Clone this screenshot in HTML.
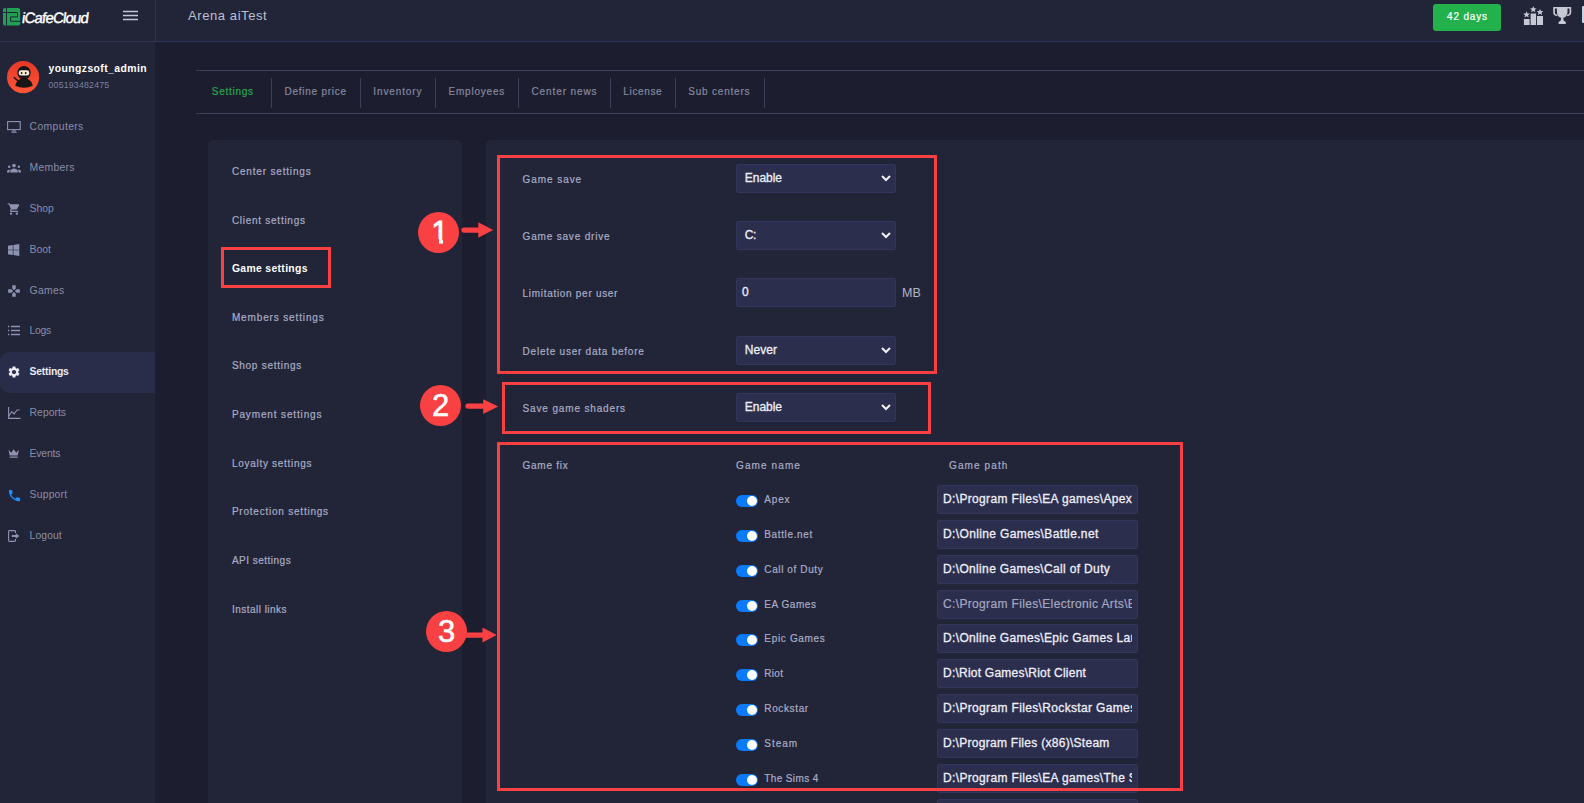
<!DOCTYPE html>
<html lang="en">
<head>
<meta charset="utf-8">
<title>iCafeCloud - Game settings</title>
<style>
*{box-sizing:border-box;margin:0;padding:0}
html,body{width:1584px;height:803px;overflow:hidden;background:#1c1d2f;font-family:"Liberation Sans",sans-serif}
#app{position:relative;width:1584px;height:803px;overflow:hidden;background:#1c1d2f}
.abs{position:absolute}
.t{position:absolute;white-space:pre;line-height:20px;height:20px}
#hdr{position:absolute;left:0;top:0;width:1584px;height:42px;background:#222438;border-bottom:1px solid #31345a}
#hdiv{position:absolute;left:155px;top:0;width:1px;height:41px;background:#31345a}
#side{position:absolute;left:0;top:42px;width:155px;height:761px;background:#222438}
#act{position:absolute;left:0;top:352px;width:155px;height:41px;background:#292d49;border-radius:9px 0 0 9px}
.ln{position:absolute;left:196px;width:1388px;height:1px;background:#3d4058}
.tdv{position:absolute;top:78px;width:1px;height:30px;background:#3d4058}
#lp{position:absolute;left:208px;top:140px;width:254px;height:700px;background:#222438;border-radius:5px}
#rp{position:absolute;left:486px;top:140px;width:1110px;height:700px;background:#222438;border-radius:5px}
.sel{position:absolute;left:736px;width:160px;height:28.6px;background:#2c2e4e;border:1px solid #32355c;border-radius:2px}
.sel svg{position:absolute;left:143.7px;top:9.6px}
.rb{position:absolute;border:3px solid #f94144}
.nc{position:absolute;width:41px;height:41px;border-radius:50%;background:#f94144;color:#fff;font-size:31px;line-height:42px;text-align:center;-webkit-text-stroke:0.55px}
.tg{position:absolute;left:735.9px;width:22.2px;height:12.4px;border-radius:6.2px;background:#0a7bff}
.tg i{position:absolute;right:1.1px;top:1.1px;width:10.2px;height:10.2px;border-radius:50%;background:#fff}
.pi{position:absolute;left:937px;width:201px;height:28.6px;background:#2c2e4e;border:1px solid #32355c;border-radius:2px;overflow:hidden}
.pt{left:943px;width:189px;overflow:hidden;font-size:12px;color:#eeeff7;-webkit-text-stroke:0.3px}
.pt.dim{color:#a4a8c0;-webkit-text-stroke:0.2px}
#btn{position:absolute;left:1433px;top:4px;width:68px;height:27px;background:#23b14d;border-radius:3px}
</style>
</head>
<body>
<div id="app">
  <!-- header -->
  <div id="hdr"></div>
  <div id="hdiv"></div>
  <!-- logo -->
  <svg class="abs" style="left:3px;top:8.300px" width="18" height="18" viewBox="0 0 18 18">
    <rect x="0" y="0" width="17.200" height="17.500" rx="2" fill="#21a253"/>
    <path d="M3.500 0V17.500 M0 4.500H3.500 M4.200 4.500H14.500V8.900H7.600V13.300H17.200" fill="none" stroke="#222438" stroke-width="1"/>
  </svg>
  <!-- hamburger -->
  <svg class="abs" style="left:123px;top:10px" width="16" height="12" viewBox="0 0 16 12">
    <path d="M0 1.6H15 M0 5.6H15 M0 9.6H15" stroke="#c3c6d4" stroke-width="1.5" fill="none"/>
  </svg>
  <div id="btn"></div>
  <!-- ranking icon -->
  <svg class="abs" style="left:1523px;top:5px" width="22" height="21" viewBox="0 0 22 21">
    <g fill="#c6c8d4">
      <rect x="0.9" y="14" width="5.7" height="6"/>
      <rect x="7.6" y="8.5" width="5.5" height="11.5"/>
      <rect x="14" y="11" width="6" height="9"/>
      <path id="st" d="M3.6 6.2l.9 2.2 2.4.2-1.8 1.6.6 2.3-2.1-1.3-2.1 1.3.6-2.3L.3 8.600l2.400-.2z"/>
      <path d="M10.300 1.000l.9 2.2 2.4.2-1.8 1.6.6 2.3-2.1-1.300-2.100 1.300.6-2.300-1.800-1.600 2.400-.2z"/>
      <path d="M17.000 3.700l.9 2.200 2.400.2-1.800 1.600.6 2.300-2.100-1.300-2.100 1.300.6-2.300-1.800-1.600 2.400-.2z"/>
    </g>
  </svg>
  <!-- trophy -->
  <svg class="abs" style="left:1553px;top:6px" width="19" height="19" viewBox="0 0 19 19">
    <g fill="#c6c8d4">
      <path d="M3.900 1h10.600v4.800c0 3.600-2.200 6.200-5.300 6.200S3.900 9.400 3.900 5.800z"/>
      <path d="M0.200 1h4.200v1.500H1.900v4.300c0 1 .9 1.700 2.500 2v1.500C1.600 9.900.2 8.700.2 6.800z"/>
      <path d="M18.200 1h-4.200v1.500h2.500v4.300c0 1-.9 1.700-2.500 2v1.500c2.800-.4 4.200-1.600 4.200-3.500z"/>
      <path d="M8.200 11.500h2l.4 3 2.200 1.600v1.900H5.600v-1.900l2.200-1.600z"/>
    </g>
  </svg>
  <div class="abs" style="left:1582.300px;top:6.300px;width:4px;height:16.500px;background:#c9d6e2;border-radius:1px"></div>

  <!-- sidebar -->
  <div id="side"></div>
  <div id="act"></div>
  <!-- avatar -->
  <svg class="abs" style="left:7px;top:60.700px" width="33" height="33" viewBox="0 0 33 33">
    <defs><linearGradient id="ag" x1="0" y1="0" x2="0" y2="1"><stop offset="0" stop-color="#e63828"/><stop offset="1" stop-color="#ff5735"/></linearGradient></defs>
    <circle cx="16.100" cy="16.200" r="16.100" fill="url(#ag)"/>
    <path d="M8.200 24.800C9.300 19.800 12.800 17.200 17 17.200s7.700 2.600 8.800 7.600Q17 28.600 8.200 24.800z" fill="#161616"/>
    <circle cx="17" cy="11.800" r="6.700" fill="#161616"/>
    <rect x="11.700" y="9.300" width="10.600" height="5.300" rx="2.400" fill="#f6ecd9"/>
    <ellipse cx="14.600" cy="12.100" rx="0.900" ry="1.100" fill="#161616"/>
    <ellipse cx="18.700" cy="12.100" rx="0.900" ry="1.100" fill="#161616"/>
    <path d="M6.800 16.200l5.200 4.600" stroke="#161616" stroke-width="1.500" fill="none"/>
  </svg>

  <!-- sidebar icons -->
  <!-- computers -->
  <svg class="abs" style="left:7px;top:121px" width="14" height="12" viewBox="0 0 14 12"><g fill="none" stroke="#8d93b0" stroke-width="1.100"><rect x="0.600" y="0.600" width="12.600" height="8"/><path d="M4.300 11.300h5.400M5.800 11l.5-2.400M8.200 11l-.5-2.400" /></g></svg>
  <!-- members -->
  <svg class="abs" style="left:7px;top:163px" width="14" height="10" viewBox="0 0 14 10"><g fill="#8d93b0"><circle cx="7" cy="2.600" r="1.800"/><path d="M3.300 9.500V8.300c0-1.800 1.900-2.800 3.700-2.800s3.700 1 3.700 2.800v1.200z"/><circle cx="2.200" cy="3.800" r="1.250"/><path d="M0 9.500V8.600c0-1.200 1-1.900 2.200-1.900.4 0 .8.050 1.100.150-.5.600-.8 1.300-.8 2.100v.550z"/><circle cx="11.800" cy="3.800" r="1.250"/><path d="M14 9.500V8.600c0-1.200-1-1.900-2.200-1.900-.4 0-.8.050-1.100.150.5.600.8 1.300.8 2.100v.550z"/></g></svg>
  <!-- shop -->
  <svg class="abs" style="left:6.500px;top:201.500px" width="14" height="14" viewBox="0 0 24 24"><path fill="#8d93b0" d="M7 18c-1.100 0-1.990.9-1.990 2S5.900 22 7 22s2-.9 2-2-.9-2-2-2zM1 2v2h2l3.600 7.590-1.350 2.450c-.16.280-.25.610-.25.960 0 1.100.9 2 2 2h12v-2H7.420c-.14 0-.25-.11-.25-.25l.03-.12.900-1.630h7.450c.75 0 1.410-.41 1.750-1.030l3.580-6.490c.08-.14.120-.31.120-.48 0-.55-.45-1-1-1H5.210l-.94-2H1zm16 16c-1.100 0-1.990.9-1.990 2s.89 2 1.990 2 2-.9 2-2-.9-2-2-2z"/></svg>
  <!-- boot (windows) -->
  <svg class="abs" style="left:8px;top:244px" width="12" height="12" viewBox="0 0 12 12"><path fill="#8d93b0" d="M0 1.700l4.800-.7v4.700H0zM5.400.900L11.300 0v5.700H5.400zM0 6.300h4.800V11L0 10.300zM5.400 6.300h5.900V12l-5.900-.9z"/></svg>
  <!-- games -->
  <svg class="abs" style="left:7px;top:283.500px" width="14" height="14" viewBox="0 0 24 24"><path fill="#8d93b0" d="M15 7.500V2H9v5.500l3 3 3-3zM7.500 9H2v6h5.500l3-3-3-3zM9 16.500V22h6v-5.500l-3-3-3 3zM16.500 9l-3 3 3 3H22V9h-5.500z"/></svg>
  <!-- logs -->
  <svg class="abs" style="left:8px;top:325px" width="13" height="11" viewBox="0 0 13 11"><path d="M0 1.500h1.300M3 1.500h9M0 5.500h1.300M3 5.500h9M0 9.500h1.300M3 9.500h9" stroke="#8d93b0" stroke-width="1.300" fill="none"/></svg>
  <!-- settings gear -->
  <svg class="abs" style="left:7px;top:365px" width="14" height="14" viewBox="0 0 24 24"><path fill="#e8e9f2" d="M19.140 12.940c.04-.3.060-.61.060-.94 0-.32-.02-.64-.07-.94l2.030-1.580c.18-.14.230-.41.120-.61l-1.920-3.320c-.12-.22-.37-.29-.59-.22l-2.390.96c-.5-.38-1.030-.7-1.620-.94l-.36-2.540c-.04-.24-.24-.41-.48-.41h-3.840c-.24 0-.43.170-.47.410l-.36 2.540c-.59.240-1.130.570-1.620.94l-2.390-.96c-.22-.08-.47 0-.59.220L2.740 8.870c-.12.210-.08.470.12.610l2.030 1.580c-.05.300-.09.630-.09.940s.02.640.07.940l-2.030 1.580c-.18.140-.23.410-.12.610l1.920 3.320c.12.220.37.290.59.220l2.390-.96c.5.380 1.030.7 1.620.94l.36 2.540c.05.240.24.410.48.410h3.840c.24 0 .44-.17.470-.41l.36-2.540c.59-.24 1.130-.56 1.620-.94l2.390.96c.22.080.47 0 .59-.22l1.920-3.320c.12-.22.070-.47-.12-.61l-2.010-1.580zM12 15.600c-1.980 0-3.600-1.620-3.600-3.600s1.620-3.600 3.600-3.600 3.600 1.620 3.600 3.600-1.620 3.600-3.600 3.600z"/></svg>
  <!-- reports -->
  <svg class="abs" style="left:8px;top:407px" width="13" height="12" viewBox="0 0 13 12"><path d="M0.600 0v11.400H12.500M0.600 9.500l3.200-5 2.300 2.300 3-3.800h2.500" stroke="#8d93b0" stroke-width="1.100" fill="none"/></svg>
  <!-- events crown -->
  <svg class="abs" style="left:8px;top:449px" width="12" height="10" viewBox="0 0 12 10"><path fill="#8d93b0" d="M0.500 0.800l2.700 3L5.700 0.300l2.500 3.500 2.700-3L9.700 6.500H1.700zM1.700 7.600h8v1.200h-8z"/></svg>
  <!-- support phone -->
  <svg class="abs" style="left:6.500px;top:487.500px" width="15" height="15" viewBox="0 0 24 24"><path fill="#1e90ff" d="M6.620 10.790c1.440 2.830 3.760 5.140 6.590 6.590l2.200-2.200c.27-.27.670-.36 1.020-.24 1.120.37 2.330.57 3.570.57.550 0 1 .45 1 1V20c0 .55-.45 1-1 1-9.390 0-17-7.610-17-17 0-.55.450-1 1-1h3.500c.55 0 1 .45 1 1 0 1.250.2 2.450.57 3.570.11.350.03.740-.25 1.020l-2.200 2.200z"/></svg>
  <!-- logout -->
  <svg class="abs" style="left:8px;top:530px" width="12" height="12" viewBox="0 0 12 12"><path d="M7.500 3V1.500c0-.5-.4-.9-.9-.9H1.500c-.5 0-.9.400-.9.900v9c0 .5.400.9.900.9h5.100c.5 0 .9-.4.900-.9V9" stroke="#8d93b0" stroke-width="1.100" fill="none"/><path fill="#8d93b0" d="M3.800 5h4V3.200L11.300 6 7.800 8.800V7h-4z"/></svg>

  <!-- tabs -->
  <div class="ln" style="top:70px"></div>
  <div class="ln" style="top:113px"></div>
  <div class="tdv" style="left:271px"></div>
  <div class="tdv" style="left:360px"></div>
  <div class="tdv" style="left:435px"></div>
  <div class="tdv" style="left:518px"></div>
  <div class="tdv" style="left:610px"></div>
  <div class="tdv" style="left:675px"></div>
  <div class="tdv" style="left:764px"></div>

  <!-- panels -->
  <div id="lp"></div>
  <div id="rp"></div>

  <!-- selects -->
  <div class="sel" style="top:164px"><svg width="10" height="7" viewBox="0 0 10 7"><path d="M1 1l4 4 4-4" stroke="#f0f0f6" stroke-width="2" fill="none"/></svg></div>
  <div class="sel" style="top:221px"><svg width="10" height="7" viewBox="0 0 10 7"><path d="M1 1l4 4 4-4" stroke="#f0f0f6" stroke-width="2" fill="none"/></svg></div>
  <div class="sel" style="top:278px"></div>
  <div class="sel" style="top:336px"><svg width="10" height="7" viewBox="0 0 10 7"><path d="M1 1l4 4 4-4" stroke="#f0f0f6" stroke-width="2" fill="none"/></svg></div>
  <div class="sel" style="top:393px"><svg width="10" height="7" viewBox="0 0 10 7"><path d="M1 1l4 4 4-4" stroke="#f0f0f6" stroke-width="2" fill="none"/></svg></div>

<div class="tg" style="top:494.7px"><i></i></div>
<div class="t" style="left:764.3px;top:490.00px;font-size:10px;color:#a9adc5;letter-spacing:0.829px;-webkit-text-stroke:0.2px;">Apex</div>
<div class="pi" style="top:485.0px"></div><div class="t pt" style="top:489px;letter-spacing:0.348px">D:\Program Files\EA games\Apex</div>
<div class="tg" style="top:529.7px"><i></i></div>
<div class="t" style="left:764.3px;top:525.00px;font-size:10px;color:#a9adc5;letter-spacing:0.635px;-webkit-text-stroke:0.2px;">Battle.net</div>
<div class="pi" style="top:520.0px"></div><div class="t pt" style="top:524px;letter-spacing:0.369px">D:\Online Games\Battle.net</div>
<div class="tg" style="top:564.7px"><i></i></div>
<div class="t" style="left:764.3px;top:560.00px;font-size:10px;color:#a9adc5;letter-spacing:0.610px;-webkit-text-stroke:0.2px;">Call of Duty</div>
<div class="pi" style="top:555.0px"></div><div class="t pt" style="top:559px;letter-spacing:0.349px">D:\Online Games\Call of Duty</div>
<div class="tg" style="top:599.7px"><i></i></div>
<div class="t" style="left:764.3px;top:595.00px;font-size:10px;color:#a9adc5;letter-spacing:0.545px;-webkit-text-stroke:0.2px;">EA Games</div>
<div class="pi" style="top:590.0px"></div><div class="t pt dim" style="top:594px;letter-spacing:0.348px">C:\Program Files\Electronic Arts\EA Desktop</div>
<div class="tg" style="top:633.7px"><i></i></div>
<div class="t" style="left:764.3px;top:629.00px;font-size:10px;color:#a9adc5;letter-spacing:0.677px;-webkit-text-stroke:0.2px;">Epic Games</div>
<div class="pi" style="top:624.0px"></div><div class="t pt" style="top:628px;letter-spacing:0.348px">D:\Online Games\Epic Games Launcher</div>
<div class="tg" style="top:668.7px"><i></i></div>
<div class="t" style="left:764.3px;top:664.00px;font-size:10px;color:#a9adc5;letter-spacing:0.315px;-webkit-text-stroke:0.2px;">Riot</div>
<div class="pi" style="top:659.0px"></div><div class="t pt" style="top:663px;letter-spacing:0.230px">D:\Riot Games\Riot Client</div>
<div class="tg" style="top:703.7px"><i></i></div>
<div class="t" style="left:764.3px;top:699.00px;font-size:10px;color:#a9adc5;letter-spacing:0.633px;-webkit-text-stroke:0.2px;">Rockstar</div>
<div class="pi" style="top:694.0px"></div><div class="t pt" style="top:698px;letter-spacing:0.348px">D:\Program Files\Rockstar Games</div>
<div class="tg" style="top:738.7px"><i></i></div>
<div class="t" style="left:764.3px;top:734.00px;font-size:10px;color:#a9adc5;letter-spacing:0.976px;-webkit-text-stroke:0.2px;">Steam</div>
<div class="pi" style="top:729.0px"></div><div class="t pt" style="top:733px;letter-spacing:0.283px">D:\Program Files (x86)\Steam</div>
<div class="tg" style="top:773.7px"><i></i></div>
<div class="t" style="left:764.3px;top:769.00px;font-size:10px;color:#a9adc5;letter-spacing:0.371px;-webkit-text-stroke:0.2px;">The Sims 4</div>
<div class="pi" style="top:764.0px"></div><div class="t pt" style="top:768px;letter-spacing:0.348px">D:\Program Files\EA games\The Sims 4</div>
<div class="tg" style="top:808.7px"><i></i></div>
<div class="t" style="left:764.3px;top:804.00px;font-size:10px;color:#a9adc5;letter-spacing:0.704px;-webkit-text-stroke:0.2px;">Ubisoft</div>
<div class="pi" style="top:799.0px"></div><div class="t pt" style="top:803px;letter-spacing:0.348px">D:\Program Files (x86)\Ubisoft</div>

<div class="t" style="left:21.2px;top:8.00px;font-size:15px;font-weight:400;color:#ffffff;letter-spacing:-0.834px;transform:skewX(-7deg);transform-origin:0 100%;-webkit-text-stroke:0.4px;">iCafeCloud</div>
<div class="t" style="left:188.0px;top:6.00px;font-size:13px;font-weight:400;color:#bcc0d2;letter-spacing:0.586px;">Arena aiTest</div>
<div class="t" style="left:1447.0px;top:7.00px;font-size:10px;font-weight:400;color:#ffffff;letter-spacing:0.841px;-webkit-text-stroke:0.2px;">42 days</div>
<div class="t" style="left:48.5px;top:59.00px;font-size:10.4px;font-weight:700;color:#ffffff;letter-spacing:0.420px;">youngzsoft_admin</div>
<div class="t" style="left:48.5px;top:75.00px;font-size:8.8px;font-weight:400;color:#7b81a0;letter-spacing:0.181px;">005193482475</div>
<div class="t" style="left:29.6px;top:117.00px;font-size:10.4px;font-weight:400;color:#888eaa;letter-spacing:0.361px;">Computers</div>
<div class="t" style="left:29.6px;top:158.00px;font-size:10.4px;font-weight:400;color:#888eaa;letter-spacing:0.244px;">Members</div>
<div class="t" style="left:29.6px;top:199.00px;font-size:10.4px;font-weight:400;color:#888eaa;letter-spacing:-0.023px;">Shop</div>
<div class="t" style="left:29.6px;top:240.00px;font-size:10.4px;font-weight:400;color:#888eaa;letter-spacing:0.007px;">Boot</div>
<div class="t" style="left:29.6px;top:281.00px;font-size:10.4px;font-weight:400;color:#888eaa;letter-spacing:0.267px;">Games</div>
<div class="t" style="left:29.6px;top:321.00px;font-size:10.4px;font-weight:400;color:#888eaa;letter-spacing:-0.271px;">Logs</div>
<div class="t" style="left:29.6px;top:362.00px;font-size:10.4px;font-weight:700;color:#e8e9f2;letter-spacing:-0.240px;">Settings</div>
<div class="t" style="left:29.6px;top:403.00px;font-size:10.4px;font-weight:400;color:#888eaa;letter-spacing:0.001px;">Reports</div>
<div class="t" style="left:29.6px;top:444.00px;font-size:10.4px;font-weight:400;color:#888eaa;letter-spacing:-0.176px;">Events</div>
<div class="t" style="left:29.6px;top:485.00px;font-size:10.4px;font-weight:400;color:#888eaa;letter-spacing:0.184px;">Support</div>
<div class="t" style="left:29.6px;top:526.00px;font-size:10.4px;font-weight:400;color:#888eaa;letter-spacing:0.076px;">Logout</div>
<div class="t" style="left:211.8px;top:82.00px;font-size:10px;font-weight:400;color:#27a94b;letter-spacing:0.715px;-webkit-text-stroke:0.2px;">Settings</div>
<div class="t" style="left:284.5px;top:82.00px;font-size:10px;font-weight:400;color:#85889e;letter-spacing:0.751px;-webkit-text-stroke:0.2px;">Define price</div>
<div class="t" style="left:373.3px;top:82.00px;font-size:10px;font-weight:400;color:#85889e;letter-spacing:0.889px;-webkit-text-stroke:0.2px;">Inventory</div>
<div class="t" style="left:448.5px;top:82.00px;font-size:10px;font-weight:400;color:#85889e;letter-spacing:0.792px;-webkit-text-stroke:0.2px;">Employees</div>
<div class="t" style="left:531.5px;top:82.00px;font-size:10px;font-weight:400;color:#85889e;letter-spacing:0.891px;-webkit-text-stroke:0.2px;">Center news</div>
<div class="t" style="left:623.3px;top:82.00px;font-size:10px;font-weight:400;color:#85889e;letter-spacing:0.651px;-webkit-text-stroke:0.2px;">License</div>
<div class="t" style="left:688.3px;top:82.00px;font-size:10px;font-weight:400;color:#85889e;letter-spacing:0.793px;-webkit-text-stroke:0.2px;">Sub centers</div>
<div class="t" style="left:231.9px;top:162.00px;font-size:10px;font-weight:400;color:#a9adc5;letter-spacing:0.823px;-webkit-text-stroke:0.2px;">Center settings</div>
<div class="t" style="left:231.9px;top:211.00px;font-size:10px;font-weight:400;color:#a9adc5;letter-spacing:0.730px;-webkit-text-stroke:0.2px;">Client settings</div>
<div class="t" style="left:231.9px;top:259.00px;font-size:10.4px;font-weight:700;color:#ffffff;letter-spacing:0.335px;">Game settings</div>
<div class="t" style="left:231.9px;top:308.00px;font-size:10px;font-weight:400;color:#a9adc5;letter-spacing:0.863px;-webkit-text-stroke:0.2px;">Members settings</div>
<div class="t" style="left:231.9px;top:356.00px;font-size:10px;font-weight:400;color:#a9adc5;letter-spacing:0.727px;-webkit-text-stroke:0.2px;">Shop settings</div>
<div class="t" style="left:231.9px;top:405.00px;font-size:10px;font-weight:400;color:#a9adc5;letter-spacing:0.863px;-webkit-text-stroke:0.2px;">Payment settings</div>
<div class="t" style="left:231.9px;top:454.00px;font-size:10px;font-weight:400;color:#a9adc5;letter-spacing:0.720px;-webkit-text-stroke:0.2px;">Loyalty settings</div>
<div class="t" style="left:231.9px;top:502.00px;font-size:10px;font-weight:400;color:#a9adc5;letter-spacing:0.775px;-webkit-text-stroke:0.2px;">Protection settings</div>
<div class="t" style="left:231.9px;top:551.00px;font-size:10px;font-weight:400;color:#a9adc5;letter-spacing:0.490px;-webkit-text-stroke:0.2px;">API settings</div>
<div class="t" style="left:231.9px;top:600.00px;font-size:10px;font-weight:400;color:#a9adc5;letter-spacing:0.480px;-webkit-text-stroke:0.2px;">Install links</div>
<div class="t" style="left:522.6px;top:170.00px;font-size:10px;font-weight:400;color:#a9adc5;letter-spacing:0.925px;-webkit-text-stroke:0.2px;">Game save</div>
<div class="t" style="left:522.6px;top:227.00px;font-size:10px;font-weight:400;color:#a9adc5;letter-spacing:0.814px;-webkit-text-stroke:0.2px;">Game save drive</div>
<div class="t" style="left:522.6px;top:284.00px;font-size:10px;font-weight:400;color:#a9adc5;letter-spacing:0.699px;-webkit-text-stroke:0.2px;">Limitation per user</div>
<div class="t" style="left:522.6px;top:342.00px;font-size:10px;font-weight:400;color:#a9adc5;letter-spacing:0.759px;-webkit-text-stroke:0.2px;">Delete user data before</div>
<div class="t" style="left:522.6px;top:399.00px;font-size:10px;font-weight:400;color:#a9adc5;letter-spacing:0.845px;-webkit-text-stroke:0.2px;">Save game shaders</div>
<div class="t" style="left:522.6px;top:456.00px;font-size:10px;font-weight:400;color:#a9adc5;letter-spacing:0.718px;-webkit-text-stroke:0.2px;">Game fix</div>
<div class="t" style="left:736.0px;top:456.00px;font-size:10px;font-weight:400;color:#a9adc5;letter-spacing:1.114px;-webkit-text-stroke:0.2px;">Game name</div>
<div class="t" style="left:949.0px;top:456.00px;font-size:10px;font-weight:400;color:#a9adc5;letter-spacing:1.119px;-webkit-text-stroke:0.2px;">Game path</div>
<div class="t" style="left:902.0px;top:283.00px;font-size:12.5px;font-weight:400;color:#b2b5c8;letter-spacing:0.167px;">MB</div>
<div class="t" style="left:744.8px;top:168.00px;font-size:12px;font-weight:400;color:#eeeff7;letter-spacing:-0.032px;-webkit-text-stroke:0.3px;">Enable</div>
<div class="t" style="left:744.8px;top:225.00px;font-size:12px;font-weight:400;color:#eeeff7;letter-spacing:-0.533px;-webkit-text-stroke:0.3px;">C:</div>
<div class="t" style="left:742.0px;top:282.00px;font-size:12px;font-weight:400;color:#eeeff7;letter-spacing:0.625px;-webkit-text-stroke:0.3px;">0</div>
<div class="t" style="left:744.8px;top:340.00px;font-size:12px;font-weight:400;color:#eeeff7;letter-spacing:0.041px;-webkit-text-stroke:0.3px;">Never</div>
<div class="t" style="left:744.8px;top:397.00px;font-size:12px;font-weight:400;color:#eeeff7;letter-spacing:-0.032px;-webkit-text-stroke:0.3px;">Enable</div>

  <!-- annotations -->
  <div class="rb" style="left:221px;top:247px;width:110px;height:41px"></div>
  <div class="rb" style="left:497px;top:155px;width:440px;height:218.500px"></div>
  <div class="rb" style="left:502px;top:382px;width:429px;height:52px"></div>
  <div class="rb" style="left:497px;top:442px;width:686px;height:349px"></div>

  <div class="nc" style="left:418px;top:212px;text-indent:2.600px;-webkit-text-stroke:0.8px">1</div>
  <div class="abs" style="left:429px;top:238.800px;width:9.500px;height:6px;background:#f94144"></div>
  <div class="abs" style="left:442.500px;top:238.800px;width:8px;height:6px;background:#f94144"></div>
  <div class="nc" style="left:420px;top:385px">2</div>
  <div class="nc" style="left:426px;top:611px">3</div>
  <svg class="abs" style="left:0;top:0" width="1584" height="803" viewBox="0 0 1584 803"><g fill="#f94144">
    <path d="M464 227.400H478.300V222.300L493.200 230 478.300 237.800V232.700H464a2.650 2.650 0 0 1 0-5.300z"/>
    <path d="M468 403.500H483.200V399.300L498.200 406.500 483.200 413.900V408.700H468a2.600 2.600 0 0 1 0-5.200z"/>
    <path d="M465 632.500H482.500V627.400L496.700 634.900 482.500 642.400V637.700H465z"/>
  </g></svg>
</div>
</body>
</html>
